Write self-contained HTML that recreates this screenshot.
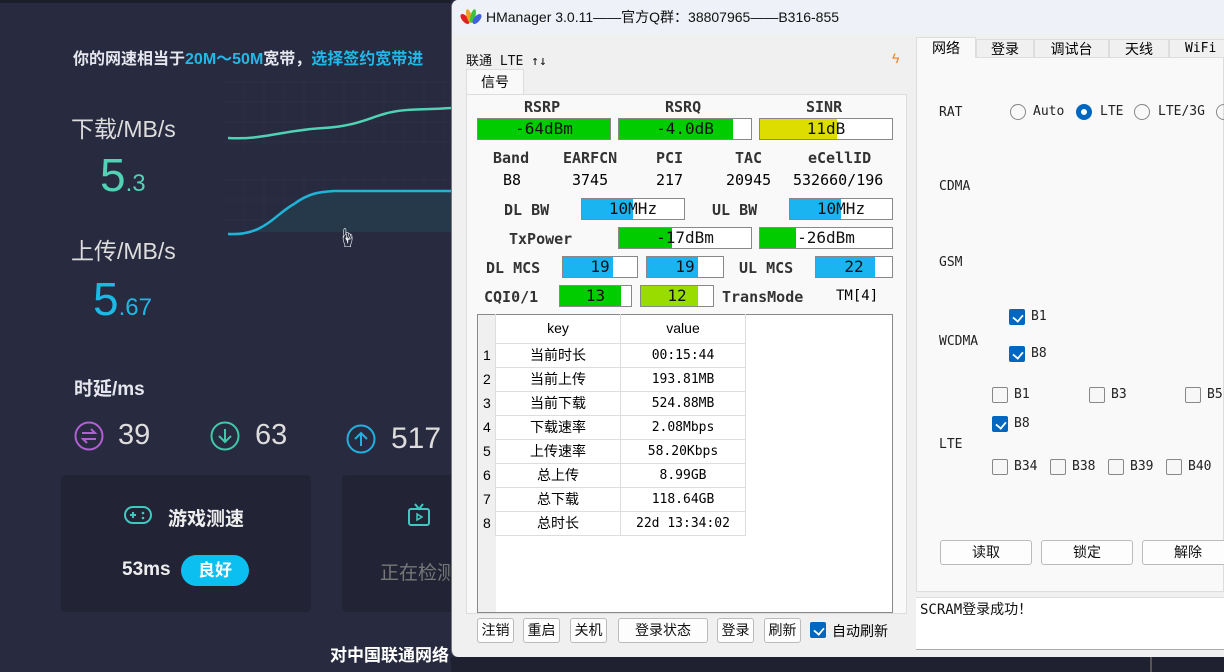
<!DOCTYPE html>
<html><head><meta charset="utf-8"><style>
*{margin:0;padding:0;box-sizing:border-box}
body{width:1224px;height:672px;overflow:hidden;background:#282a3f;position:relative;font-family:"Liberation Sans","Noto Sans CJK SC",sans-serif}
.a{position:absolute;white-space:nowrap}
.m{font-family:"DejaVu Sans Mono","Liberation Mono","Noto Sans CJK SC",monospace}
.lb{font-family:"DejaVu Sans Mono",monospace;font-weight:bold;font-size:15px;color:#333}
.bar{position:absolute;border:1px solid #888;background:#fff;height:22px;font-family:"DejaVu Sans Mono",monospace;font-size:16px;text-align:center;line-height:20px;color:#111;overflow:hidden}
.bar i{position:absolute;left:0;top:0;bottom:0}
.bar span{position:relative}
.btn{position:absolute;border:1px solid #bbb;background:#fdfdfd;border-radius:3px;height:25px;font-size:14px;text-align:center;line-height:23px;color:#111;font-family:"Liberation Sans","Noto Sans CJK SC",sans-serif}
.cb{position:absolute;width:16px;height:16px;border:1px solid #888;border-radius:2px;background:#f7f7f7}
.cb.on{background:#0067c0;border-color:#0067c0}
.cb.on:after{content:"";position:absolute;left:4px;top:2px;width:6px;height:8px;border:solid #fff;border-width:0 2px 2px 0;transform:rotate(40deg) scale(0.9)}
.rt{font-family:"DejaVu Sans Mono",monospace;font-size:13px;color:#222}
table{border-collapse:collapse}
td{border:1px solid #ddd;height:24px;font-size:14px;text-align:center;padding:0}
.rn{position:absolute;left:5px;font-size:14px}
</style></head><body>
<div class="a" style="left:0;top:0;width:451px;height:3px;background:#1d1e2c"></div>
<div class="a" style="left:73px;top:45px;font-size:16px;font-weight:bold;color:#e6e6ee">你的网速相当于<span style="color:#22b8e8">20M～50M</span>宽带，<span style="color:#22b8e8">选择签约宽带进</span></div>
<div class="a" style="left:71px;top:110px;font-size:23px;color:#ddd">下载/MB/s</div>
<div class="a" style="left:100px;top:148px;font-size:46px;color:#4fd3b4">5<span style="font-size:24px">.3</span></div>
<div class="a" style="left:71px;top:232px;font-size:23px;color:#ddd">上传/MB/s</div>
<div class="a" style="left:93px;top:272px;font-size:46px;color:#1cb8e6">5<span style="font-size:24px">.67</span></div>
<svg class="a" style="left:224px;top:80px" width="227" height="160">
<g stroke="#2d2f44" stroke-width="1">
<path d="M0 2H227M0 22H227M0 42H227M0 62H227M0 100H227M0 120H227M0 140H227M20 0V70M40 0V70M60 0V70M80 0V70M100 0V70M120 0V70M140 0V70M160 0V70M180 0V70M200 0V70M220 0V70M20 95V152M40 95V152M60 95V152M80 95V152M100 95V152M120 95V152M140 95V152M160 95V152M180 95V152M200 95V152M220 95V152"/></g>
<path d="M4 58 C40 60 60 50 100 48 C130 46 140 40 160 34 C180 28 200 30 227 28" fill="none" stroke="#4fd3b4" stroke-width="2.5"/>
<path d="M4 154 C40 156 50 135 70 124 C85 113 95 112 110 111 H227 V152 H4Z" fill="#26394a"/>
<path d="M4 154 C40 156 50 135 70 124 C85 113 95 112 110 111 H227" fill="none" stroke="#20b4d8" stroke-width="2.5"/>
</svg>
<div class="a" style="left:337px;top:222px;font-size:20px;color:#fff">☝</div>
<div class="a" style="left:74px;top:374px;font-size:19px;font-weight:bold;color:#e6e6ee">时延/ms</div>
<svg class="a" style="left:74px;top:421px" width="30" height="30"><circle cx="15" cy="15" r="13.5" fill="none" stroke="#b060d0" stroke-width="2"/><path d="M8 12H21L17 8M22 18H9L13 22" fill="none" stroke="#b060d0" stroke-width="2"/></svg>
<div class="a" style="left:118px;top:419px;font-size:29px;color:#ddd">39</div>
<svg class="a" style="left:210px;top:421px" width="30" height="30"><circle cx="15" cy="15" r="13.5" fill="none" stroke="#3fc9a8" stroke-width="2"/><path d="M15 8V21M9 15L15 21L21 15" fill="none" stroke="#3fc9a8" stroke-width="2"/></svg>
<div class="a" style="left:255px;top:419px;font-size:29px;color:#ddd">63</div>
<svg class="a" style="left:346px;top:424px" width="30" height="30"><circle cx="15" cy="15" r="13.5" fill="none" stroke="#22b0e0" stroke-width="2"/><path d="M15 22V9M9 15L15 9L21 15" fill="none" stroke="#22b0e0" stroke-width="2"/></svg>
<div class="a" style="left:391px;top:422px;font-size:30px;color:#ddd">517</div>
<div class="a" style="left:61px;top:475px;width:250px;height:137px;background:#222436;border-radius:4px"></div>
<div class="a" style="left:342px;top:475px;width:120px;height:137px;background:#222436;border-radius:4px"></div>
<svg class="a" style="left:124px;top:505px" width="28" height="20"><rect x="1" y="2" width="26" height="16" rx="8" fill="none" stroke="#3fc9c0" stroke-width="2"/><path d="M6 10H12M9 7V13" stroke="#3fc9c0" stroke-width="2"/><circle cx="19" cy="8" r="1.3" fill="#3fc9c0"/><circle cx="19" cy="13" r="1.3" fill="#3fc9c0"/></svg>
<div class="a" style="left:168px;top:504px;font-size:19px;font-weight:bold;color:#eee">游戏测速</div>
<div class="a" style="left:122px;top:559px;font-size:19px;font-weight:bold;color:#eee">53ms</div>
<div class="a" style="left:181px;top:555px;width:68px;height:31px;border-radius:16px;background:#0bc0f0;color:#fff;font-weight:bold;font-size:17px;text-align:center;line-height:31px">良好</div>
<svg class="a" style="left:407px;top:502px" width="24" height="26"><path d="M8 2L12 7L16 2" fill="none" stroke="#3fc9c0" stroke-width="2"/><rect x="2" y="7" width="20" height="16" rx="2" fill="none" stroke="#3fc9c0" stroke-width="2"/><path d="M10 12V18L15 15Z" fill="none" stroke="#3fc9c0" stroke-width="1.5"/></svg>
<div class="a" style="left:380px;top:558px;font-size:19px;color:#777">正在检测</div>
<div class="a" style="left:330px;top:641px;font-size:17px;font-weight:bold;color:#fff">对中国联通网络</div>
<div class="a" style="left:451px;top:657px;width:773px;height:15px;background:#1f2030"></div>
<div class="a" style="left:1150px;top:655px;width:74px;height:17px;border-left:2px solid #555"></div>

<!-- window -->
<div class="a" style="left:451px;top:0;width:773px;height:657px;background:#f0f0f0;border-radius:7px 0 0 7px;border-left:1px solid #777;overflow:hidden">
<div class="a" style="left:0;top:0;width:773px;height:34px;background:#eef1f7"></div>
<svg class="a" style="left:8px;top:7px" width="22" height="18"><g><ellipse cx="5" cy="12" rx="3" ry="6" fill="#e02020" transform="rotate(-40 5 12)"/><ellipse cx="9" cy="9" rx="2.5" ry="7" fill="#f0a020" transform="rotate(-15 9 9)"/><ellipse cx="13" cy="9" rx="2.5" ry="7" fill="#40c040" transform="rotate(15 13 9)"/><ellipse cx="17" cy="12" rx="3" ry="6" fill="#4060e0" transform="rotate(40 17 12)"/></g></svg>
<div class="a" style="left:34px;top:7px;font-size:14px;color:#111">HManager 3.0.11——官方Q群：38807965——B316-855</div>
<div class="a m" style="left:14px;top:50px;font-size:13px;color:#111">联通 LTE ↑↓</div>
<div class="a" style="left:440px;top:50px;color:#f08020;font-size:14px">ϟ</div>
<div class="a" style="left:14px;top:69px;width:58px;height:26px;background:#f9f9f9;border:1px solid #ddd;border-bottom:none;font-size:14px;text-align:center;line-height:24px">信号</div>
<div class="a" style="left:14px;top:94px;width:441px;height:520px;background:#f9f9f9;border:1px solid #ddd"></div>
</div>
<div class="a lb" style="left:524px;top:98px">RSRP</div>
<div class="a lb" style="left:665px;top:98px">RSRQ</div>
<div class="a lb" style="left:806px;top:98px">SINR</div>
<div class="bar" style="left:477px;top:118px;width:134px"><i style="width:100%;background:#00cc00"></i><span>-64dBm</span></div>
<div class="bar" style="left:618px;top:118px;width:134px"><i style="width:86%;background:#00cc00"></i><span>-4.0dB</span></div>
<div class="bar" style="left:759px;top:118px;width:134px"><i style="width:58%;background:#dddd00"></i><span>11dB</span></div>
<div class="a lb" style="left:493px;top:149px">Band</div>
<div class="a lb" style="left:563px;top:149px">EARFCN</div>
<div class="a lb" style="left:656px;top:149px">PCI</div>
<div class="a lb" style="left:735px;top:149px">TAC</div>
<div class="a lb" style="left:808px;top:149px">eCellID</div>
<div class="a m" style="left:503px;top:171px;font-size:15px">B8</div>
<div class="a m" style="left:572px;top:171px;font-size:15px">3745</div>
<div class="a m" style="left:656px;top:171px;font-size:15px">217</div>
<div class="a m" style="left:726px;top:171px;font-size:15px">20945</div>
<div class="a m" style="left:793px;top:171px;font-size:15px">532660/196</div>
<div class="a lb" style="left:504px;top:201px">DL BW</div>
<div class="bar" style="left:581px;top:198px;width:104px"><i style="width:50%;background:#1ab4f0"></i><span>10MHz</span></div>
<div class="a lb" style="left:712px;top:201px">UL BW</div>
<div class="bar" style="left:789px;top:198px;width:104px"><i style="width:50%;background:#1ab4f0"></i><span>10MHz</span></div>
<div class="a lb" style="left:509px;top:230px">TxPower</div>
<div class="bar" style="left:618px;top:227px;width:134px"><i style="width:40%;background:#00cc00"></i><span>-17dBm</span></div>
<div class="bar" style="left:759px;top:227px;width:134px"><i style="width:27%;background:#00cc00"></i><span>-26dBm</span></div>
<div class="a lb" style="left:486px;top:259px">DL MCS</div>
<div class="bar" style="left:562px;top:256px;width:76px"><i style="width:67%;background:#1ab4f0"></i><span>19</span></div>
<div class="bar" style="left:646px;top:256px;width:78px"><i style="width:67%;background:#1ab4f0"></i><span>19</span></div>
<div class="a lb" style="left:739px;top:259px">UL MCS</div>
<div class="bar" style="left:815px;top:256px;width:78px"><i style="width:77%;background:#1ab4f0"></i><span>22</span></div>
<div class="a lb" style="left:484px;top:288px">CQI0/1</div>
<div class="bar" style="left:559px;top:285px;width:73px"><i style="width:86%;background:#00cc00"></i><span>13</span></div>
<div class="bar" style="left:640px;top:285px;width:74px"><i style="width:79%;background:#99dd00"></i><span>12</span></div>
<div class="a lb" style="left:722px;top:288px">TransMode</div>
<div class="a m" style="left:836px;top:288px;font-size:14px">TM[4]</div>
<div class="a" style="left:477px;top:314px;width:416px;height:299px;background:#fff;border:1px solid #888">
<div class="a" style="left:0;top:0;width:18px;height:297px;background:#f0f0f0"></div>
<table class="a" style="left:17px;top:-1px;width:251px">
<tr><td style="width:125px;height:29px;border-top:none">key</td><td style="border-top:none">value</td></tr>
<tr><td>当前时长</td><td class="m" style="font-size:13px">00:15:44</td></tr>
<tr><td>当前上传</td><td class="m" style="font-size:13px">193.81MB</td></tr>
<tr><td>当前下载</td><td class="m" style="font-size:13px">524.88MB</td></tr>
<tr><td>下载速率</td><td class="m" style="font-size:13px">2.08Mbps</td></tr>
<tr><td>上传速率</td><td class="m" style="font-size:13px">58.20Kbps</td></tr>
<tr><td>总上传</td><td class="m" style="font-size:13px">8.99GB</td></tr>
<tr><td>总下载</td><td class="m" style="font-size:13px">118.64GB</td></tr>
<tr><td>总时长</td><td class="m" style="font-size:13px">22d 13:34:02</td></tr>
</table>
<div class="rn" style="top:32px">1</div><div class="rn" style="top:56px">2</div><div class="rn" style="top:80px">3</div><div class="rn" style="top:104px">4</div><div class="rn" style="top:128px">5</div><div class="rn" style="top:152px">6</div><div class="rn" style="top:176px">7</div><div class="rn" style="top:200px">8</div>
</div>
<div class="btn" style="left:477px;top:618px;width:37px">注销</div>
<div class="btn" style="left:523px;top:618px;width:37px">重启</div>
<div class="btn" style="left:570px;top:618px;width:37px">关机</div>
<div class="btn" style="left:618px;top:618px;width:90px">登录状态</div>
<div class="btn" style="left:717px;top:618px;width:37px">登录</div>
<div class="btn" style="left:764px;top:618px;width:37px">刷新</div>
<div class="cb on" style="left:810px;top:622px"></div>
<div class="a" style="left:832px;top:621px;font-size:14px">自动刷新</div>
<div class="a" style="left:916px;top:57px;width:308px;height:535px;background:#f9f9f9;border:1px solid #ddd"></div>
<div class="a" style="left:916px;top:37px;width:60px;height:21px;background:#f9f9f9;border:1px solid #ddd;border-bottom:none;font-size:14px;text-align:center;line-height:20px">网络</div>
<div class="a" style="left:976px;top:39px;width:58px;height:19px;background:#f0f0f0;border:1px solid #ddd;font-size:14px;text-align:center;line-height:18px">登录</div>
<div class="a" style="left:1034px;top:39px;width:75px;height:19px;background:#f0f0f0;border:1px solid #ddd;font-size:14px;text-align:center;line-height:18px">调试台</div>
<div class="a" style="left:1109px;top:39px;width:60px;height:19px;background:#f0f0f0;border:1px solid #ddd;font-size:14px;text-align:center;line-height:18px">天线</div>
<div class="a m" style="left:1169px;top:39px;width:60px;height:19px;background:#f0f0f0;border:1px solid #ddd;font-size:13px;line-height:18px;padding-left:15px">WiFi</div>
<div class="a rt" style="left:939px;top:105px">RAT</div>
<div class="a" style="left:1010px;top:104px;width:16px;height:16px;border:1px solid #888;border-radius:50%"></div>
<div class="a rt" style="left:1033px;top:104px">Auto</div>
<div class="a" style="left:1076px;top:104px;width:16px;height:16px;border:5px solid #0067c0;border-radius:50%;background:#fff"></div>
<div class="a rt" style="left:1100px;top:104px">LTE</div>
<div class="a" style="left:1134px;top:104px;width:16px;height:16px;border:1px solid #888;border-radius:50%"></div>
<div class="a rt" style="left:1158px;top:104px">LTE/3G</div>
<div class="a" style="left:1216px;top:104px;width:16px;height:16px;border:1px solid #888;border-radius:50%"></div>
<div class="a rt" style="left:939px;top:179px">CDMA</div>
<div class="a rt" style="left:939px;top:255px">GSM</div>
<div class="a rt" style="left:939px;top:334px">WCDMA</div>
<div class="cb on" style="left:1009px;top:309px"></div><div class="a rt" style="left:1031px;top:309px">B1</div>
<div class="cb on" style="left:1009px;top:346px"></div><div class="a rt" style="left:1031px;top:346px">B8</div>
<div class="a rt" style="left:939px;top:437px">LTE</div>
<div class="cb" style="left:992px;top:387px"></div><div class="a rt" style="left:1014px;top:387px">B1</div>
<div class="cb" style="left:1089px;top:387px"></div><div class="a rt" style="left:1111px;top:387px">B3</div>
<div class="cb" style="left:1185px;top:387px"></div><div class="a rt" style="left:1207px;top:387px">B5</div>
<div class="cb on" style="left:992px;top:416px"></div><div class="a rt" style="left:1014px;top:416px">B8</div>
<div class="cb" style="left:992px;top:459px"></div><div class="a rt" style="left:1014px;top:459px">B34</div>
<div class="cb" style="left:1050px;top:459px"></div><div class="a rt" style="left:1072px;top:459px">B38</div>
<div class="cb" style="left:1108px;top:459px"></div><div class="a rt" style="left:1130px;top:459px">B39</div>
<div class="cb" style="left:1166px;top:459px"></div><div class="a rt" style="left:1188px;top:459px">B40</div>
<div class="btn" style="left:940px;top:540px;width:92px">读取</div>
<div class="btn" style="left:1041px;top:540px;width:92px">锁定</div>
<div class="btn" style="left:1142px;top:540px;width:92px">解除</div>
<div class="a" style="left:916px;top:597px;width:308px;height:53px;background:#fff;border-top:1px solid #ddd;border-bottom:1px solid #aaa"></div>
<div class="a m" style="left:920px;top:599px;font-size:14px;color:#111">SCRAM登录成功！</div>
</body></html>
